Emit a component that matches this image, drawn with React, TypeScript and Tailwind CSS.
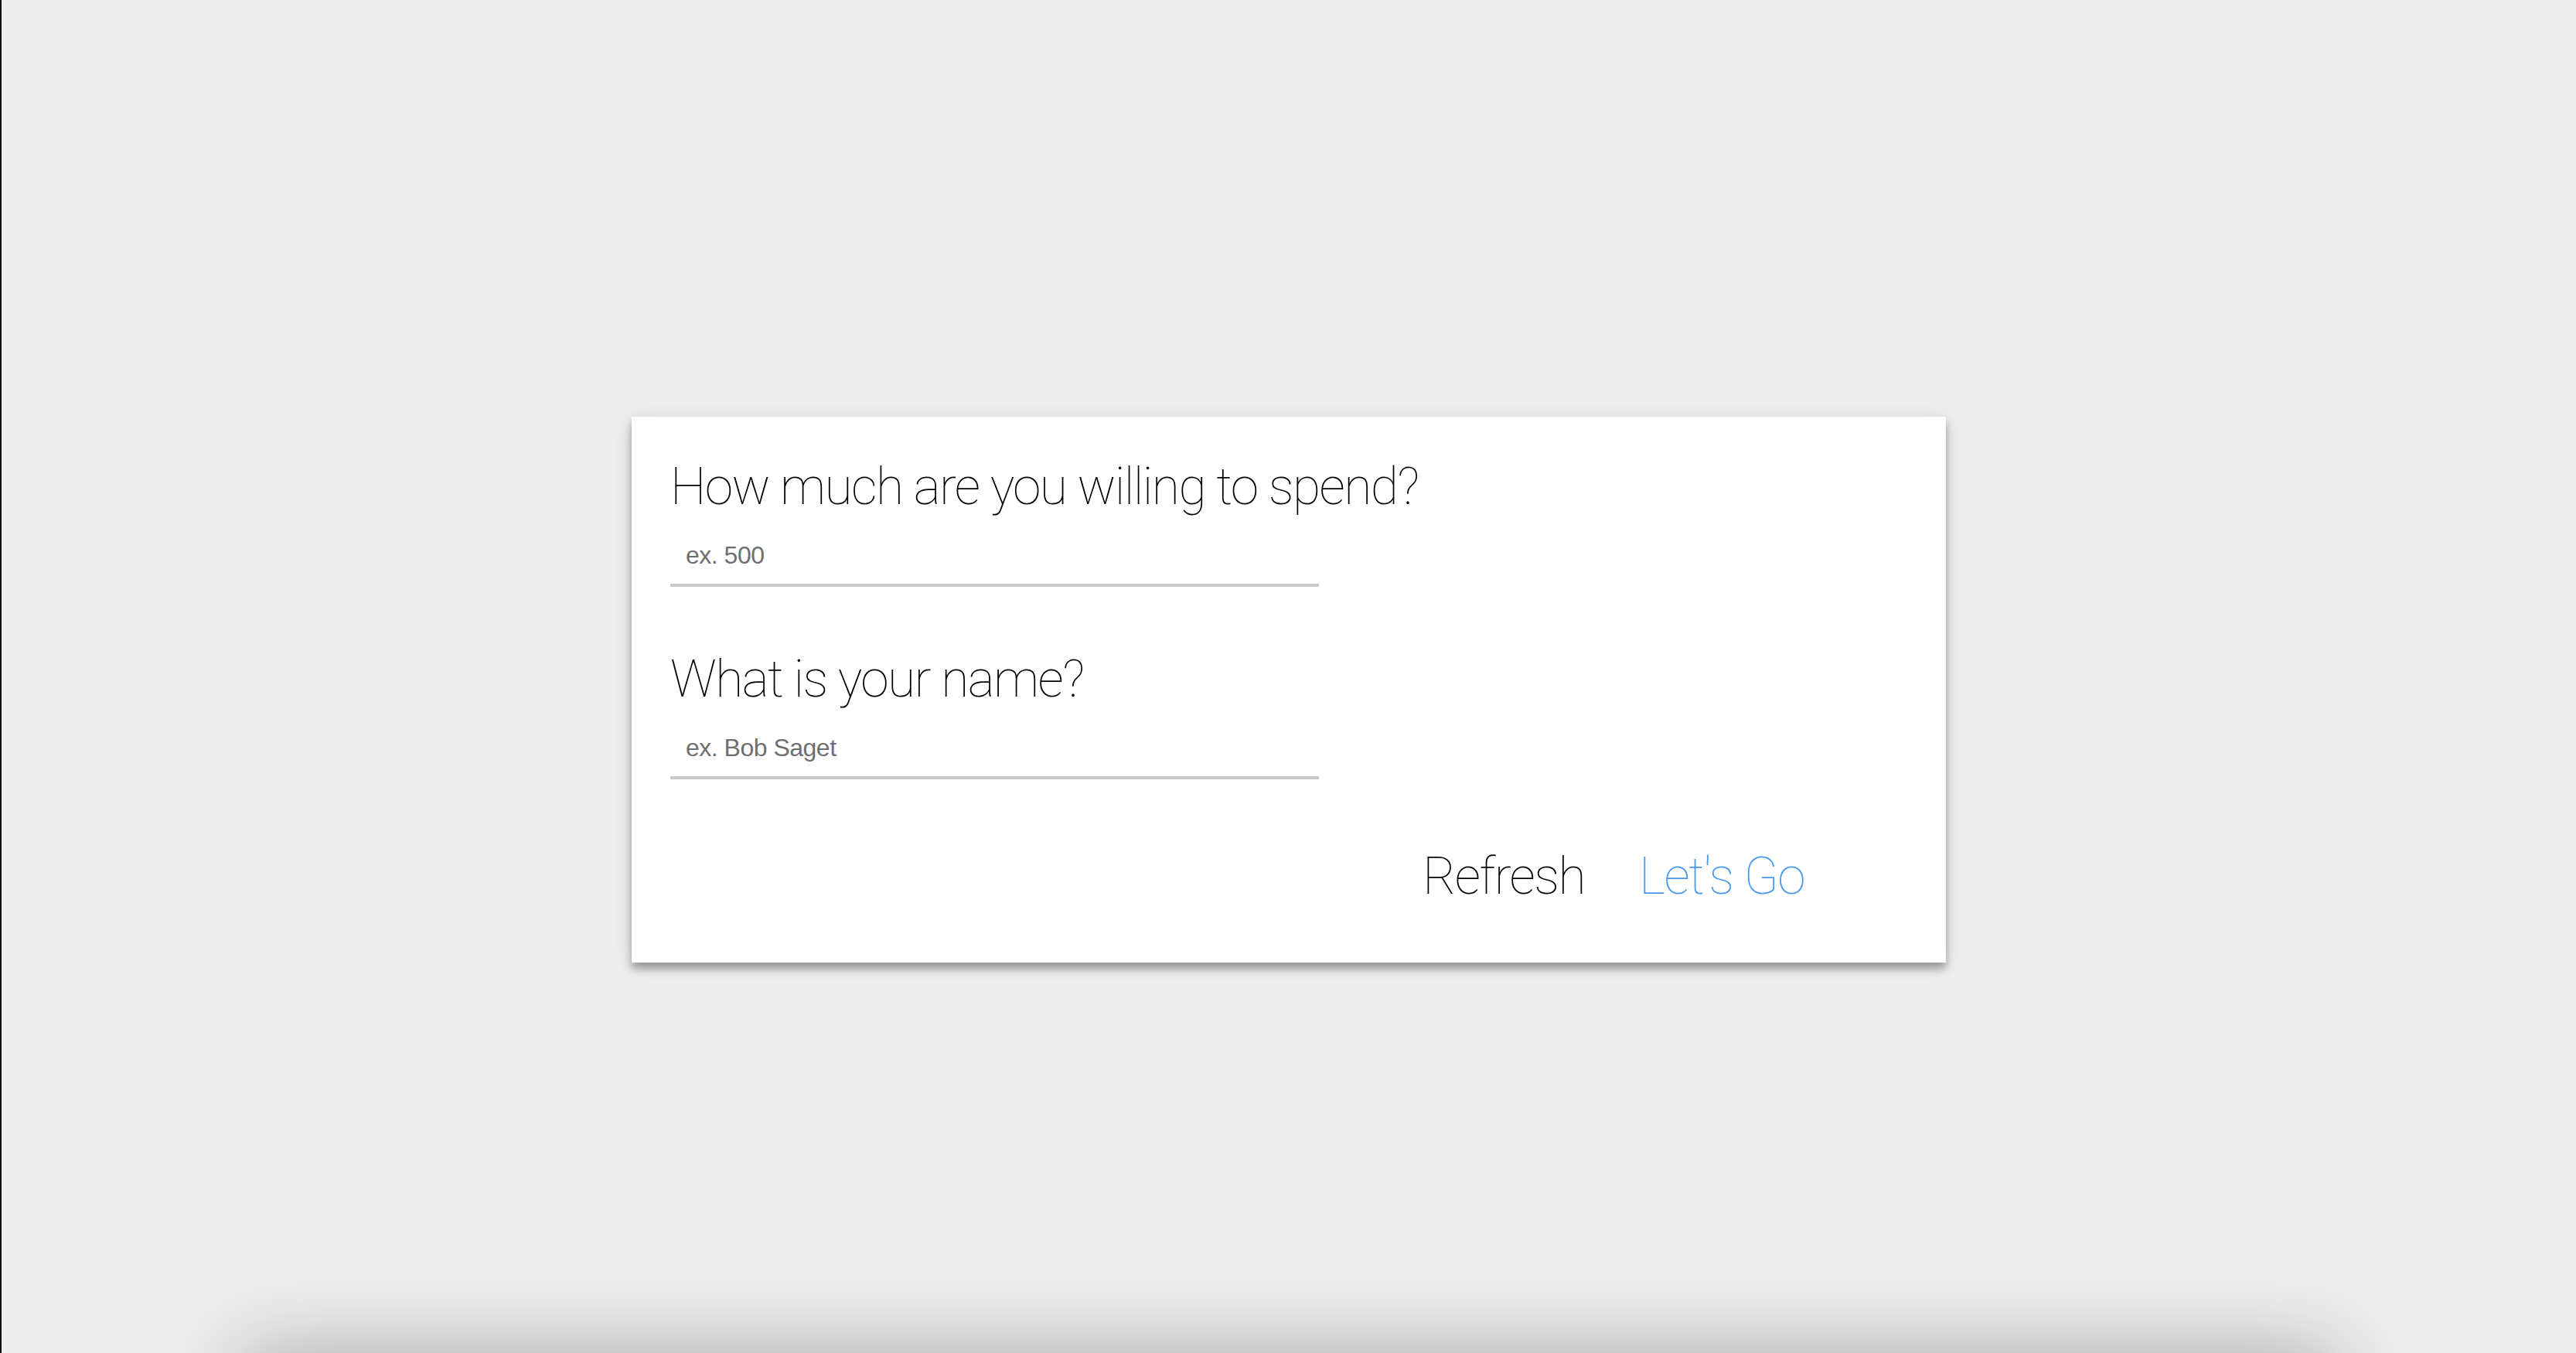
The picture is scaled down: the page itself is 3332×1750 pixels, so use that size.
import { useState } from "react";

const thin = "font-['Roboto',_'Liberation_Sans',_sans-serif] font-thin tracking-[-1.6px]";

interface FieldProps {
  question: string;
  placeholder: string;
  className?: string;
}

const Field = ({ question, placeholder, className }: FieldProps) => {
  const [value, setValue] = useState("");
  return (
    <div className={className}>
      <h2 className={`${thin} text-[66px] leading-none text-black`}>{question}</h2>
      <input
        value={value}
        onChange={(e) => setValue(e.target.value)}
        placeholder={placeholder}
        className="mt-[18px] block h-[78px] w-[839px] border-b-4 border-[#c8c8c8] bg-transparent pl-[20px] font-['Liberation_Sans',_sans-serif] text-[32px] tracking-[-0.5px] text-black outline-none placeholder:text-[#6f6f6f]"
      />
    </div>
  );
};

export default function App() {
  return (
    <div className="min-h-screen overflow-hidden border-l-2 border-[#111] bg-[#eeeeee]">
      <section className="h-[1750px] pt-[539px]">
        {/* Card */}
        <div className="mx-auto w-[1700px] bg-white pl-[50px] pt-[58px] pb-[78px] shadow-[0_8px_10px_rgba(0,0,0,0.32),0_4px_30px_rgba(0,0,0,0.1)]">
          <Field question="How much are you willing to spend?" placeholder="ex. 500" />
          <Field question="What is your name?" placeholder="ex. Bob Saget" className="mt-[87px]" />

          <div className={`${thin} mt-[93px] flex justify-end gap-[70px] pr-[183px] text-[66px] leading-none`}>
            <button className="text-black">Refresh</button>
            <button className="text-[#4a98ec]">Let's Go</button>
          </div>
        </div>
      </section>

      {/* next panel, just below the fold */}
      <div className="mx-[310px] h-[400px] bg-white shadow-[0_0_100px_rgba(0,0,0,0.3)]" />
    </div>
  );
}
